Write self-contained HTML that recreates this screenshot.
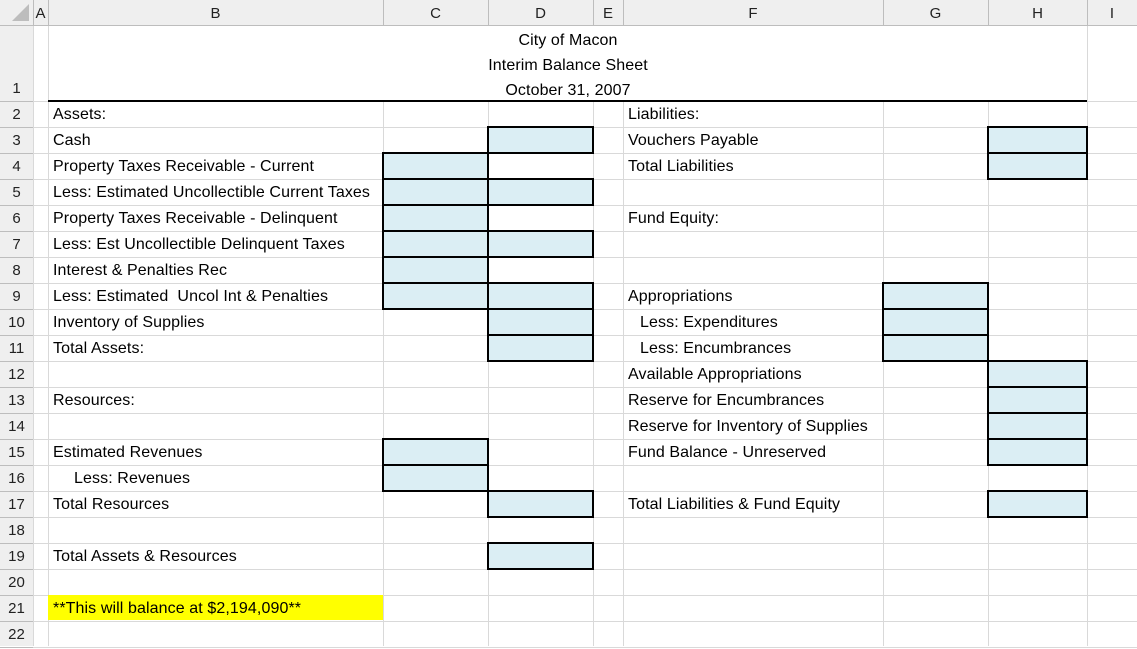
<!DOCTYPE html>
<html><head><meta charset="utf-8"><style>
body{margin:0;width:1137px;height:646px;overflow:hidden;background:#fff;position:relative;font-family:"Liberation Sans",Calibri,sans-serif;font-size:16px;letter-spacing:0.1px;color:#000}
.hd{position:absolute;background:#efefef}
.l{position:absolute;background:#d9d9d9}
.hl{position:absolute;background:#bdbdbd}
.t{position:absolute;height:26px;line-height:28px;white-space:nowrap}
.ch{position:absolute;top:0;height:25px;line-height:27px;text-align:center;font-size:15px;color:#222;letter-spacing:0}
.rh{position:absolute;left:0;width:33px;text-align:center;font-size:15px;color:#222;line-height:28px;height:26px;letter-spacing:0}
.b{position:absolute;background:#dbeef4;border:2px solid #000;box-sizing:border-box}
.c{position:absolute;text-align:center;width:300px;left:418px}
</style></head><body>
<div class="hd" style="left:0;top:0;width:1137px;height:25px"></div>
<div class="hd" style="left:0;top:0;width:33px;height:646px"></div>
<div id="g"></div>
<svg style="position:absolute;left:0;top:0" width="33" height="25"><polygon points="29,4 29,21 12,21" fill="#bdbdbd"/></svg>
<div class="ch" style="left:33px;width:15px">A</div>
<div class="ch" style="left:48px;width:335px">B</div>
<div class="ch" style="left:383px;width:105px">C</div>
<div class="ch" style="left:488px;width:105px">D</div>
<div class="ch" style="left:593px;width:30px">E</div>
<div class="ch" style="left:623px;width:260px">F</div>
<div class="ch" style="left:883px;width:105px">G</div>
<div class="ch" style="left:988px;width:99px">H</div>
<div class="ch" style="left:1087px;width:50px">I</div>
<div class="rh" style="top:75px">1</div>
<div class="rh" style="top:101px">2</div><div class="rh" style="top:127px">3</div><div class="rh" style="top:153px">4</div><div class="rh" style="top:179px">5</div><div class="rh" style="top:205px">6</div><div class="rh" style="top:231px">7</div><div class="rh" style="top:257px">8</div><div class="rh" style="top:283px">9</div><div class="rh" style="top:309px">10</div><div class="rh" style="top:335px">11</div><div class="rh" style="top:361px">12</div><div class="rh" style="top:387px">13</div><div class="rh" style="top:413px">14</div><div class="rh" style="top:439px">15</div><div class="rh" style="top:465px">16</div><div class="rh" style="top:491px">17</div><div class="rh" style="top:517px">18</div><div class="rh" style="top:543px">19</div><div class="rh" style="top:569px">20</div><div class="rh" style="top:595px">21</div><div class="rh" style="top:621px">22</div>
<div style="position:absolute;left:48px;top:595px;width:335px;height:25px;background:#ffff00"></div>
<div style="position:absolute;left:49px;top:26px;width:1038px;height:74px;background:#fff"></div>
<div style="position:absolute;left:48px;top:100px;width:1039px;height:2px;background:#000"></div>
<div id="bx"></div>
<div class="c t" style="top:27px">City of Macon</div>
<div class="c t" style="top:52px">Interim Balance Sheet</div>
<div class="c t" style="top:77px">October 31, 2007</div>
<div class="t" style="left:53px;top:101px">Assets:</div>
<div class="t" style="left:53px;top:127px">Cash</div>
<div class="t" style="left:53px;top:153px">Property Taxes Receivable - Current</div>
<div class="t" style="left:53px;top:179px">Less: Estimated Uncollectible Current Taxes</div>
<div class="t" style="left:53px;top:205px">Property Taxes Receivable - Delinquent</div>
<div class="t" style="left:53px;top:231px">Less: Est Uncollectible Delinquent Taxes</div>
<div class="t" style="left:53px;top:257px">Interest &amp; Penalties Rec</div>
<div class="t" style="left:53px;top:283px">Less: Estimated&nbsp; Uncol Int &amp; Penalties</div>
<div class="t" style="left:53px;top:309px">Inventory of Supplies</div>
<div class="t" style="left:53px;top:335px">Total Assets:</div>
<div class="t" style="left:53px;top:387px">Resources:</div>
<div class="t" style="left:53px;top:439px">Estimated Revenues</div>
<div class="t" style="left:74px;top:465px">Less: Revenues</div>
<div class="t" style="left:53px;top:491px">Total Resources</div>
<div class="t" style="left:53px;top:543px">Total Assets &amp; Resources</div>
<div class="t" style="left:53px;top:595px">**This will balance at $2,194,090**</div>
<div class="t" style="left:628px;top:101px">Liabilities:</div>
<div class="t" style="left:628px;top:127px">Vouchers Payable</div>
<div class="t" style="left:628px;top:153px">Total Liabilities</div>
<div class="t" style="left:628px;top:205px">Fund Equity:</div>
<div class="t" style="left:628px;top:283px">Appropriations</div>
<div class="t" style="left:640px;top:309px">Less: Expenditures</div>
<div class="t" style="left:640px;top:335px">Less: Encumbrances</div>
<div class="t" style="left:628px;top:361px">Available Appropriations</div>
<div class="t" style="left:628px;top:387px">Reserve for Encumbrances</div>
<div class="t" style="left:628px;top:413px">Reserve for Inventory of Supplies</div>
<div class="t" style="left:628px;top:439px">Fund Balance - Unreserved</div>
<div class="t" style="left:628px;top:491px">Total Liabilities &amp; Fund Equity</div>
<script>
var g=document.getElementById('g'),h='';
var xs=[33,48,383,488,593,623,883,988,1087];
xs.forEach(function(x){h+='<div class="hl" style="left:'+x+'px;top:0;width:1px;height:25px"></div><div class="l" style="left:'+x+'px;top:25px;width:1px;height:621px"></div>';});
h+='<div class="hl" style="left:0;top:25px;width:1137px;height:1px"></div>';
for(var r=1;r<=22;r++){var y=r==1?101:101+(r-1)*26;h+='<div class="hl" style="left:0;top:'+y+'px;width:33px;height:1px"></div><div class="l" style="left:33px;top:'+y+'px;width:1104px;height:1px"></div>';}
g.innerHTML=h;
var cols={C:[382,105],D:[487,105],G:[882,105],H:[987,99]};
var boxes=[['C',4],['C',5],['C',6],['C',7],['C',8],['C',9],['C',15],['C',16],['D',3],['D',5],['D',7],['D',9],['D',10],['D',11],['D',17],['D',19],['G',9],['G',10],['G',11],['H',3],['H',4],['H',12],['H',13],['H',14],['H',15],['H',17]];
var b='';boxes.forEach(function(k){var c=cols[k[0]],y=100+(k[1]-2)*26;b+='<div class="b" style="left:'+c[0]+'px;top:'+y+'px;width:'+(c[1]+2)+'px;height:28px"></div>';});
document.getElementById('bx').innerHTML=b;
</script>
</body></html>
